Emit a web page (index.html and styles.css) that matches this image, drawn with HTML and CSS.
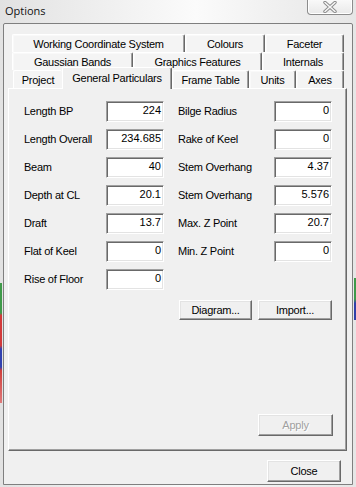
FILE: index.html
```html
<!DOCTYPE html>
<html>
<head>
<meta charset="utf-8">
<title>Options</title>
<link rel="stylesheet" href="styles.css">
</head>
<body>
<div class="window">
  <div class="titlebar">
    <span class="title">Options</span>
    <div class="close-x">
      <svg width="16" height="12" viewBox="0 0 16 12">
        <path d="M3 1.5 L13 10.5 M13 1.5 L3 10.5" stroke="#8a8a8a" stroke-width="3.4" stroke-linecap="round" fill="none"/>
        <path d="M3 1.5 L13 10.5 M13 1.5 L3 10.5" stroke="#f6f6f6" stroke-width="1.6" stroke-linecap="round" fill="none"/>
      </svg>
    </div>
  </div>
  <div class="client">
    <div class="tabs">
      <div class="tab-row">
        <div class="tab t-wcs">Working Coordinate System</div>
        <div class="tab t-col">Colours</div>
        <div class="tab t-fac">Faceter</div>
      </div>
      <div class="tab-row">
        <div class="tab t-gau">Gaussian Bands</div>
        <div class="tab t-gra">Graphics Features</div>
        <div class="tab t-int">Internals</div>
      </div>
      <div class="tab-row row3">
        <div class="tab t-pro">Project</div>
        <div class="tab selected t-gen">General Particulars</div>
        <div class="tab t-fra">Frame Table</div>
        <div class="tab t-uni">Units</div>
        <div class="tab t-axe">Axes</div>
      </div>
      <div class="panel">
        <div class="fields">
          <span class="lbl">Length BP</span><span class="edit">224</span>
          <span class="lbl lbl-r">Bilge Radius</span><span class="edit">0</span>

          <span class="lbl">Length Overall</span><span class="edit">234.685</span>
          <span class="lbl lbl-r">Rake of Keel</span><span class="edit">0</span>

          <span class="lbl">Beam</span><span class="edit">40</span>
          <span class="lbl lbl-r">Stem Overhang</span><span class="edit">4.37</span>

          <span class="lbl">Depth at CL</span><span class="edit">20.1</span>
          <span class="lbl lbl-r">Stem Overhang</span><span class="edit">5.576</span>

          <span class="lbl">Draft</span><span class="edit">13.7</span>
          <span class="lbl lbl-r">Max. Z Point</span><span class="edit">20.7</span>

          <span class="lbl">Flat of Keel</span><span class="edit">0</span>
          <span class="lbl lbl-r">Min. Z Point</span><span class="edit">0</span>

          <span class="lbl">Rise of Floor</span><span class="edit">0</span>
        </div>
        <div class="btn-row">
          <div class="btn b-diag">Diagram...</div>
          <div class="btn b-imp">Import...</div>
        </div>
        <div class="apply-row">
          <div class="btn disabled b-apply">Apply</div>
        </div>
      </div>
    </div>
    <div class="footer">
      <div class="btn b-close">Close</div>
    </div>
  </div>
  <div class="desk-left"></div>
  <div class="desk-right"></div>
</div>
</body>
</html>
```
FILE: styles.css
```css
* { box-sizing: border-box; }
html, body { margin: 0; padding: 0; }
body {
  width: 356px;
  height: 487px;
  overflow: hidden;
  background: #eeeeee;
  font-family: "Liberation Sans", Arial, sans-serif;
  font-size: 11px;
  letter-spacing: -0.25px;
  color: #000;
}
.window {
  position: relative;
  width: 356px;
  height: 487px;
  background: linear-gradient(90deg, #e2e2e2 0%, #f2f2f2 35%, #fbfbfb 55%, #f1f1f1 75%, #e6e6e6 100%);
}
.titlebar {
  height: 23px;
  display: flex;
  align-items: flex-start;
  justify-content: space-between;
}
.title {
  font-family: "Open Sans", "Liberation Sans", sans-serif;
  font-size: 11px;
  letter-spacing: 0;
  line-height: 21px;
  padding-left: 5px;
  color: #111;
}
.close-x {
  width: 46px;
  height: 16px;
  margin-right: 3px;
  margin-top: -1px;
  border: 1px solid #8c8c8c;
  border-top: none;
  border-radius: 0 0 4px 4px;
  background: linear-gradient(#fafafa, #e9e9e9);
  box-shadow: inset 0 0 0 1px #ffffff;
  display: flex;
  align-items: center;
  justify-content: center;
}
.close-x svg { display: block; margin-top: 1px; }

.client {
  margin-left: 3px;
  width: 350px;
  height: 462px;
  border: 1px solid #7f7f7f;
  border-radius: 2px 2px 0 0;
  background: #f0f0f0;
  padding: 10px 5px 0 4px;
}
.tabs { width: 339px; }
.tab-row {
  display: flex;
  height: 18px;
  margin-left: 4px;
}
.tab-row.row3 { margin-left: 5px; }
.tab {
  height: 18px;
  border-top: 1px solid #ffffff;
  border-left: 1px solid #ffffff;
  border-right: 1px solid #696969;
  box-shadow: inset -1px 0 #a0a0a0, inset 1px 1px #f9f9f9;
  border-radius: 2px 2px 0 0;
  background: #f4f4f4;
  text-align: center;
  line-height: 18px;
  white-space: nowrap;
}
.t-wcs { width: 173px; }
.t-col { width: 80px; }
.t-fac { width: 79px; }
.t-gau { width: 121px; }
.t-gra { width: 129px; }
.t-int { width: 82px; }
.t-pro { width: 49px; border-right: none; box-shadow: none; }
.t-gen { width: 110px; }
.t-fra { width: 77px; }
.t-uni { width: 47px; }
.t-axe { width: 48px; }
.tab.selected {
  position: relative;
  z-index: 1;
  height: 22px;
  margin-top: -3px;
  padding-top: 1px;
  background: #f0f0f0;
  box-shadow: inset -1px 0 #a0a0a0;
}

.panel {
  height: 363px;
  border: 1px solid;
  border-color: #ffffff #696969 #696969 #ffffff;
  box-shadow: inset -1px -1px #a0a0a0;
  background: #f0f0f0;
  display: flex;
  flex-direction: column;
  padding: 12px 0 14px 0;
}
.fields {
  display: grid;
  grid-template-columns: 82px 58px 110px 58px;
  grid-auto-rows: 21px;
  row-gap: 7px;
  padding-left: 15px;
}
.lbl {
  line-height: 21px;
  white-space: nowrap;
}
.lbl-r { padding-left: 14px; }
.edit {
  background: #ffffff;
  border: 1px solid;
  border-color: #a0a0a0 #ffffff #ffffff #a0a0a0;
  box-shadow: inset 1px 1px #696969, inset -1px -1px #e3e3e3;
  text-align: right;
  padding-right: 2px;
  padding-top: 2px;
  line-height: 12px;
  letter-spacing: 0;
}

.btn {
  background: #f0f0f0;
  border: 1px solid;
  border-color: #ffffff #696969 #696969 #ffffff;
  box-shadow: inset -1px -1px #a0a0a0, inset 1px 1px #e3e3e3;
  text-align: center;
  white-space: nowrap;
}
.btn-row {
  display: flex;
  gap: 6px;
  margin-top: 10px;
  padding-left: 170px;
}
.b-diag { width: 73px; height: 20px; line-height: 18px; }
.b-imp { width: 74px; height: 20px; line-height: 18px; }
.apply-row {
  margin-top: auto;
  padding-left: 249px;
}
.b-apply { width: 75px; height: 22px; line-height: 20px; }
.btn.disabled {
  color: #a0a0a0;
  text-shadow: 1px 1px 0 #ffffff;
}
.footer {
  display: flex;
  justify-content: flex-end;
  padding-top: 9px;
  padding-right: 6px;
}
.b-close { width: 74px; height: 22px; line-height: 20px; }

.desk-left {
  position: absolute;
  left: 0;
  top: 283px;
  width: 2px;
  height: 120px;
  background: linear-gradient(#3f9a4a 0%, #3f9a4a 25%, #d23a3a 27%, #d23a3a 52%, #3242b0 55%, #3242b0 70%, #d0403c 73%, #e07a7a 100%);
}
.desk-right {
  position: absolute;
  right: 0;
  top: 278px;
  width: 2px;
  height: 42px;
  background: linear-gradient(#3f9a4a 0%, #3f9a4a 50%, #3040a8 60%, #3040a8 100%);
}
```
